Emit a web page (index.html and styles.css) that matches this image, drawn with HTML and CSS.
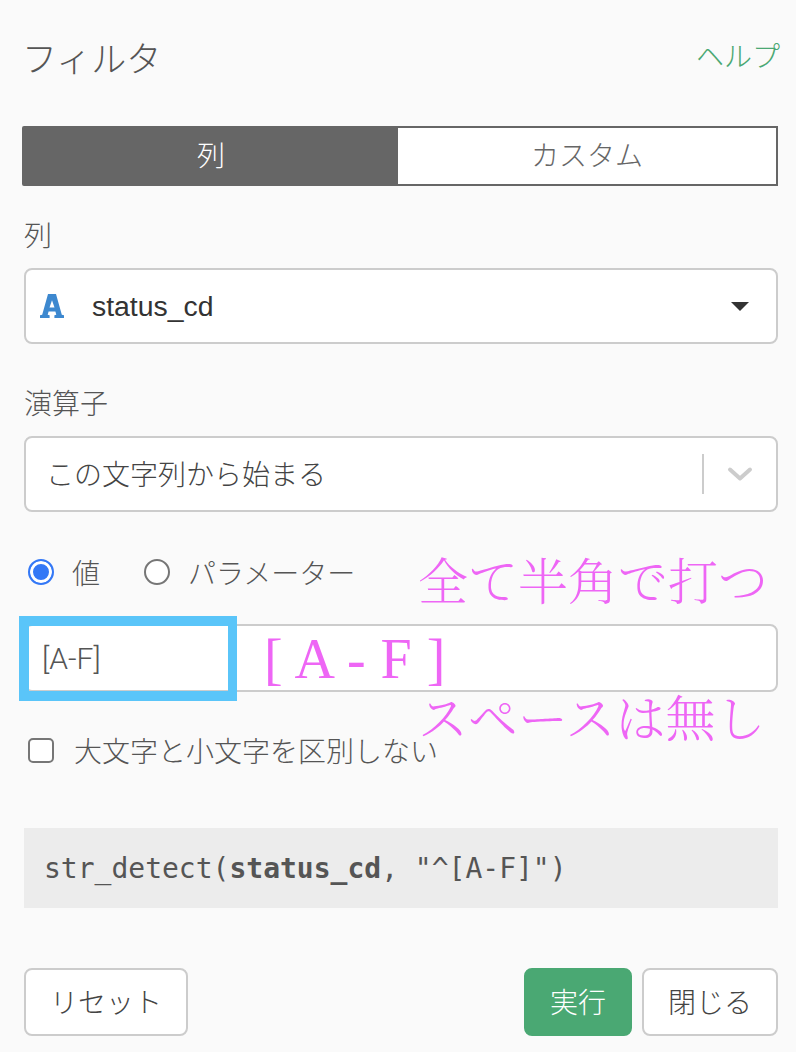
FILE: index.html
```html
<!DOCTYPE html>
<html lang="ja">
<head>
<meta charset="utf-8">
<title>フィルタ</title>
<link rel="stylesheet" href="styles.css">
</head>
<body>
<main class="panel">
  <header class="head">
    <h1 class="title">フィルタ</h1>
    <a class="help">ヘルプ</a>
  </header>
  <div class="tabs">
    <div class="tab tab-on">列</div>
    <div class="tab">カスタム</div>
  </div>
  <div class="label label-col">列</div>
  <div class="field field-col">
    <svg class="type-icon" viewBox="0 0 26 26" width="26" height="26"><path fill="#3d88cf" fill-rule="evenodd" d="M9 1h8l5.800 20.800 2.200.5V25h-9.600v-2.700l1.900-.5-.9-3.300H9.600l-.9 3.300 1.900.5V25H1v-2.700l2.200-.5zM13 7.300l-2.500 7.300h5z"/></svg>
    <span class="col-name">status_cd</span>
    <span class="caret"></span>
  </div>
  <div class="label label-op">演算子</div>
  <div class="field field-op">
    <span class="op-text">この文字列から始まる</span>
    <span class="sep"></span>
    <svg class="chev" viewBox="0 0 26 16" width="26" height="16"><path d="M3 3.500 13 12.500 23 3.500" fill="none" stroke="#ccc" stroke-width="4" stroke-linecap="round" stroke-linejoin="round"/></svg>
  </div>
  <div class="radios">
    <span class="radio radio-on"></span><span class="radio-label">値</span>
    <span class="radio radio-off"></span><span class="radio-label">パラメーター</span>
  </div>
  <div class="value-wrap">
    <div class="field field-val"><span>[A-F]</span></div>
    <div class="highlight"></div>
    <div class="note note-top">全て半角で打つ</div>
    <div class="note-latin">[ A - F ]</div>
    <div class="note note-bot">スペースは無し</div>
  </div>
  <div class="check">
    <span class="box"></span><span>大文字と小文字を区別しない</span>
  </div>
  <pre class="code">str_detect(<b>status_cd</b>, "^[A-F]")</pre>
  <footer class="foot">
    <div class="btn btn-reset">リセット</div>
    <div class="btn-right">
      <div class="btn btn-run">実行</div>
      <div class="btn btn-close">閉じる</div>
    </div>
  </footer>
</main>
</body>
</html>
```
FILE: styles.css
```css
* { box-sizing: border-box; }
html, body { margin: 0; padding: 0; }
body {
  width: 796px;
  height: 1052px;
  overflow: hidden;
  background: #fafafa;
  color: #555;
  font-family: "Liberation Sans", "Noto Sans CJK JP", sans-serif;
  font-size: 28px;
  font-weight: 300;
}
.panel { padding: 0 18px 0 24px; }
.head {
  height: 126px;
  display: flex;
  justify-content: space-between;
  align-items: flex-start;
  padding-top: 36px;
}
.title { margin: 0 0 0 -2px; font-size: 35px; line-height: 48px; font-weight: 300; color: #555; }
.help { margin-right: -2px; font-size: 28px; line-height: 44px; color: #4aa873; }
.tabs {
  display: flex;
  height: 60px;
  margin-left: -2px;
  border: 2px solid #666;
  border-radius: 2px 0 0 2px;
  background: #fff;
}
.tab { display: flex; align-items: center; justify-content: center; padding-bottom: 4px; color: #666; }
.tab-on { background: #666; color: #fff; width: 374px; }
.tab + .tab { flex: 1; }
.label { line-height: 36px; color: #555; }
.label-col { margin-top: 33px; margin-bottom: -1px; }
.label-op { margin-top: 43px; margin-bottom: -1px; }
.field {
  background: #fff;
  border: 2px solid #ccc;
  border-radius: 8px;
  display: flex;
  align-items: center;
}
.field-col { height: 76px; margin-top: 14px; padding: 0 27px 0 13px; }
.type-icon { flex: none; }
.col-name { margin-left: 27px; font-size: 28.4px; font-weight: 400; color: #333; flex: 1; }
.caret { width: 0; height: 0; border-left: 9px solid transparent; border-right: 9px solid transparent; border-top: 9px solid #333; }
.field-op { height: 76px; margin-top: 14px; padding: 0 23px 0 20px; }
.op-text { flex: 1; color: #444; padding-bottom: 3px; }
.sep { width: 2px; height: 40px; background: #ccc; margin-right: 23px; }
.radios { display: flex; align-items: center; height: 40px; margin-top: 40px; padding-left: 4px; }
.radio { width: 26px; height: 26px; border-radius: 50%; flex: none; background: #fff; }
.radio-on { border: 2px solid #3478f6; box-shadow: inset 0 0 0 3px #fff; background: #3478f6; }
.radio-off { border: 2px solid #767676; margin-left: 44px; }
.radio-label { margin-left: 18px; color: #555; }
.value-wrap { position: relative; margin-top: 32px; }
.field-val { height: 68px; padding-left: 16px; font-family: Roboto, "Liberation Sans", sans-serif; font-size: 30px; color: #555; }
.highlight { position: absolute; left: -5px; top: -8px; width: 218px; height: 85px; border: 10px solid #5ac5f9; border-right-width: 9px; }
.note { position: absolute; color: #ee66f5; font-size: 50px; line-height: 60px; white-space: nowrap; font-family: "Noto Serif CJK JP", "Noto Sans CJK JP", serif; font-weight: 300; }
.note-top { left: 394px; top: -76px; }
.note-bot { left: 394px; top: 61px; }
.note-latin { position: absolute; left: 240px; top: 3px; color: #ee66f5; font-family: "Liberation Serif", serif; font-size: 56px; line-height: 64px; word-spacing: 1px; white-space: nowrap; }
.check { display: flex; align-items: center; gap: 20px; height: 40px; margin-top: 38px; padding-left: 4px; }
.box { width: 26px; height: 25px; border: 2px solid #767676; border-radius: 5px; background: #fff; flex: none; }
.code {
  margin: 58px 0 0;
  height: 80px;
  padding: 0 20px;
  background: #ececec;
  color: #555;
  font-family: "DejaVu Sans Mono", monospace;
  font-size: 28px;
  line-height: 82px;
  font-weight: 400;
}
.foot { display: flex; justify-content: space-between; margin-top: 60px; }
.btn-right { display: flex; gap: 10px; }
.btn {
  height: 68px;
  display: flex;
  align-items: center;
  justify-content: center;
  padding-bottom: 3px;
  background: #fff;
  border: 2px solid #ccc;
  border-radius: 8px;
  color: #444;
}
.btn-reset { width: 164px; }
.btn-run { width: 108px; background: #4aa873; border-color: #4aa873; color: #fff; }
.btn-close { width: 136px; }
```
